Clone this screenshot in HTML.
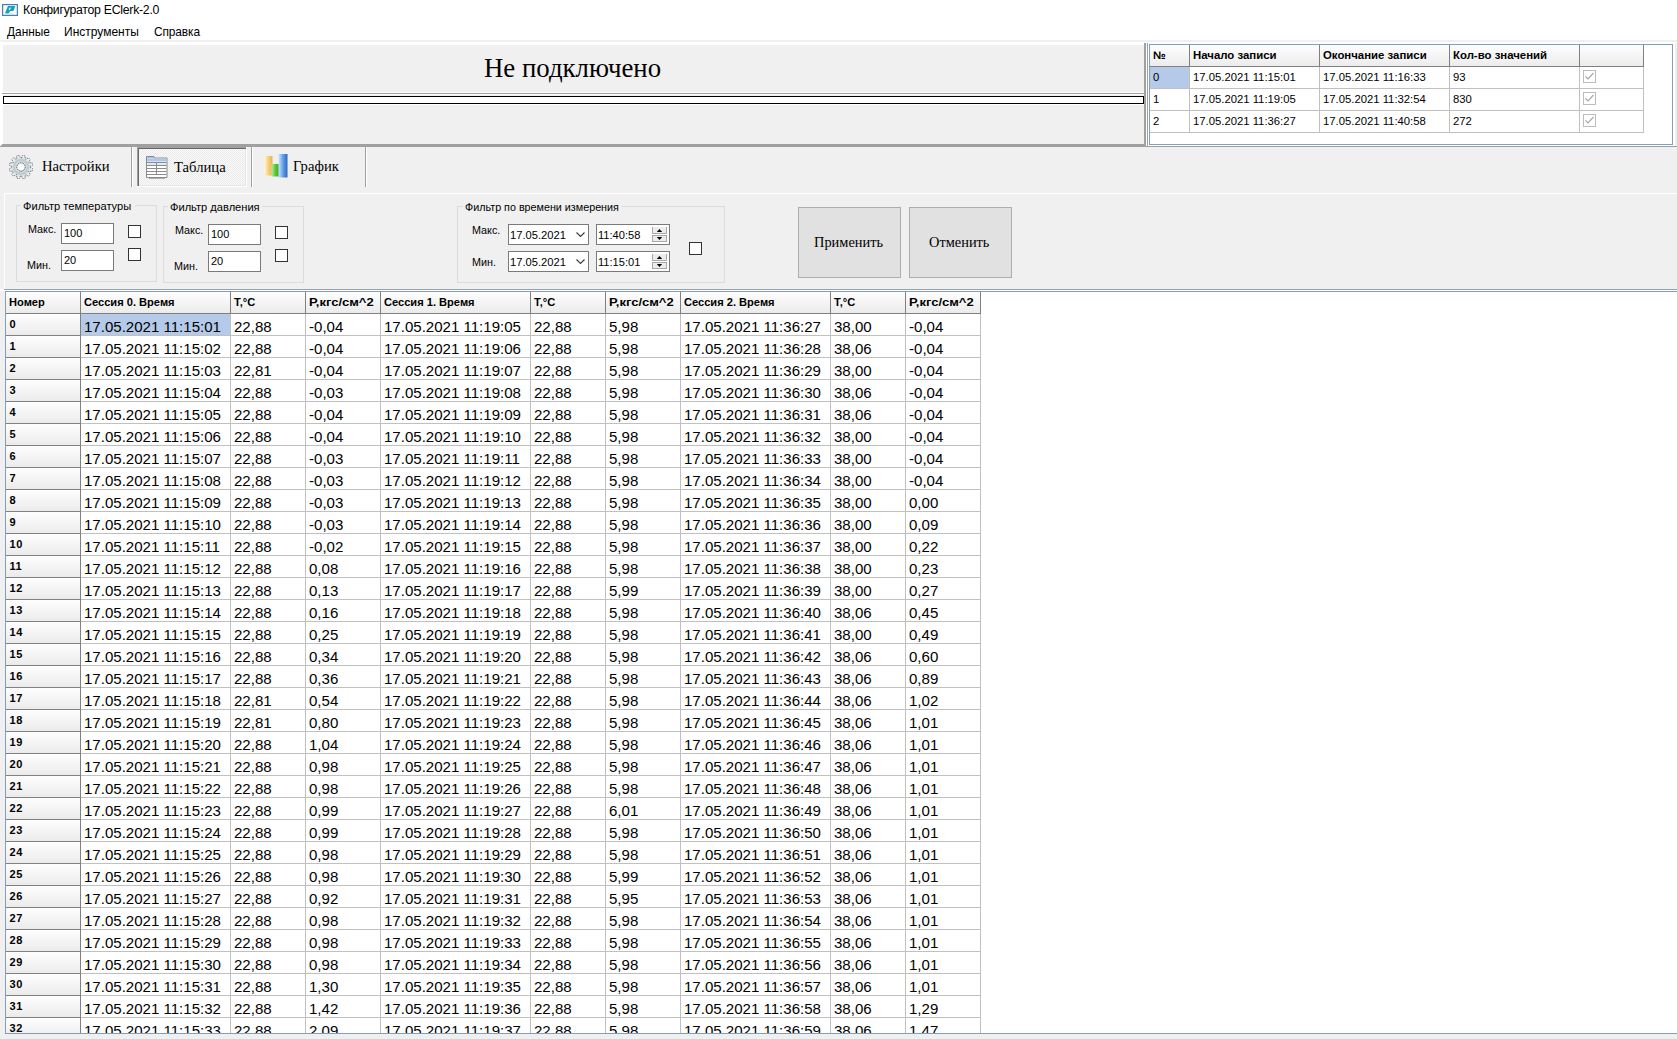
<!DOCTYPE html>
<html><head><meta charset="utf-8"><title>Конфигуратор EClerk-2.0</title>
<style>
html,body{margin:0;padding:0}
body{width:1677px;height:1039px;overflow:hidden;background:#fff;position:relative;font-family:"Liberation Sans", sans-serif;color:#000}
.a{position:absolute}
.t{position:absolute;white-space:pre;font-family:"Liberation Sans", sans-serif}
.sf{font-family:"Liberation Serif", serif}
</style></head><body>
<svg class="a" style="left:2px;top:4px" width="16" height="12" viewBox="0 0 16 12">
<rect x="0.6" y="0.6" width="14.8" height="10.8" fill="#fdfbf0" stroke="#3f83b8" stroke-width="1.2"/>
<path d="M6 2 H13.2 L12 6 Q11.6 6.9 10.5 6.9 H8.2 L6.9 8.9 Q6.5 9.4 5.5 9.4 H3.6 Q3 9.3 3.3 8.6 Z" fill="#14a0c2"/>
<path d="M7.6 3.4 H8.9 L7.9 6.1 H6.6 Z" fill="#fdfbf0"/>
<path d="M6.5 9.8 H11" stroke="#c4e0ea" stroke-width="0.9"/>
</svg>
<div class="t" style="left:23px;top:3.868px;font-size:12.3px;line-height:13.739px;letter-spacing:-0.27px;">Конфигуратор EClerk-2.0</div>
<div class="t" style="left:7px;top:26.23px;font-size:11.9px;line-height:13.292px;">Данные</div>
<div class="t" style="left:64px;top:26.14px;font-size:12px;line-height:13.404px;">Инструменты</div>
<div class="t" style="left:154px;top:26.23px;font-size:11.9px;line-height:13.292px;letter-spacing:-0.1px;">Справка</div>
<div class="a" style="left:0px;top:40px;width:1677px;height:2px;background:#f0f0f0"></div>
<div class="a" style="left:3px;top:45px;width:1141px;height:99px;background:#f0f0f0"></div>
<div class="a" style="left:2px;top:92px;width:1143px;height:1px;background:#fff"></div>
<div class="a" style="left:2px;top:93px;width:1143px;height:1px;background:#a0a0a0"></div>
<div class="a" style="left:2px;top:94px;width:1143px;height:1px;background:#fff"></div>
<div class="a" style="left:3px;top:96px;width:1141px;height:8px;background:#fff;border:1px solid #000;box-sizing:border-box"></div>
<div class="a" style="left:3px;top:104px;width:1141px;height:1px;background:#fff"></div>
<div class="t sf" style="left:484px;top:54.121px;font-size:26.8px;line-height:29.668px;">Не подключено</div>
<div class="a" style="left:1144px;top:43px;width:2px;height:104px;background:#a0a0a0"></div>
<div class="a" style="left:1146px;top:43px;width:1px;height:104px;background:#fff"></div>
<div class="a" style="left:1147px;top:43px;width:1px;height:104px;background:#a0a0a0"></div>
<div class="a" style="left:1148px;top:43px;width:1px;height:104px;background:#fff"></div>
<div class="a" style="left:1149px;top:44px;width:524px;height:101px;background:#fff;border:1px solid #7f9fbf;box-sizing:border-box"></div>
<div class="a" style="left:1673px;top:43px;width:2px;height:104px;background:#fff"></div>
<div class="a" style="left:1675px;top:43px;width:2px;height:104px;background:#f0f0f0"></div>
<div class="a" style="left:1150px;top:45px;width:493px;height:21px;background:linear-gradient(#fefefe,#ececec)"></div>
<div class="a" style="left:1150px;top:66px;width:494px;height:1px;background:#808080"></div>
<div class="a" style="left:1189px;top:45px;width:1px;height:21px;background:#808080"></div>
<div class="a" style="left:1319px;top:45px;width:1px;height:21px;background:#808080"></div>
<div class="a" style="left:1449px;top:45px;width:1px;height:21px;background:#808080"></div>
<div class="a" style="left:1579px;top:45px;width:1px;height:21px;background:#808080"></div>
<div class="a" style="left:1643px;top:45px;width:1px;height:21px;background:#808080"></div>
<div class="t" style="left:1153px;top:48.683px;font-size:11.4px;line-height:12.734px;font-weight:bold;">№</div>
<div class="t" style="left:1193px;top:48.683px;font-size:11.4px;line-height:12.734px;font-weight:bold;">Начало записи</div>
<div class="t" style="left:1323px;top:48.683px;font-size:11.4px;line-height:12.734px;font-weight:bold;">Окончание записи</div>
<div class="t" style="left:1453px;top:48.683px;font-size:11.4px;line-height:12.734px;font-weight:bold;">Кол-во значений</div>
<div class="a" style="left:1150px;top:67px;width:39px;height:21px;background:#b5cae8"></div>
<div class="a" style="left:1150px;top:88px;width:494px;height:1px;background:#c0c0c0"></div>
<div class="t" style="left:1153px;top:70.773px;font-size:11.3px;line-height:12.622px;">0</div>
<div class="t" style="left:1193px;top:70.773px;font-size:11.3px;line-height:12.622px;">17.05.2021 11:15:01</div>
<div class="t" style="left:1323px;top:70.773px;font-size:11.3px;line-height:12.622px;">17.05.2021 11:16:33</div>
<div class="t" style="left:1453px;top:70.773px;font-size:11.3px;line-height:12.622px;">93</div>
<svg class="a" style="left:1583px;top:70px" width="13" height="13" viewBox="0 0 13 13"><rect x="0.5" y="0.5" width="12" height="12" fill="#fff" stroke="#bcbcbc"/><path d="M2.5 6.5 L5 9 L10.5 3" fill="none" stroke="#a8a8a8" stroke-width="1.2"/></svg>
<div class="a" style="left:1150px;top:110px;width:494px;height:1px;background:#c0c0c0"></div>
<div class="t" style="left:1153px;top:92.773px;font-size:11.3px;line-height:12.622px;">1</div>
<div class="t" style="left:1193px;top:92.773px;font-size:11.3px;line-height:12.622px;">17.05.2021 11:19:05</div>
<div class="t" style="left:1323px;top:92.773px;font-size:11.3px;line-height:12.622px;">17.05.2021 11:32:54</div>
<div class="t" style="left:1453px;top:92.773px;font-size:11.3px;line-height:12.622px;">830</div>
<svg class="a" style="left:1583px;top:92px" width="13" height="13" viewBox="0 0 13 13"><rect x="0.5" y="0.5" width="12" height="12" fill="#fff" stroke="#bcbcbc"/><path d="M2.5 6.5 L5 9 L10.5 3" fill="none" stroke="#a8a8a8" stroke-width="1.2"/></svg>
<div class="a" style="left:1150px;top:132px;width:494px;height:1px;background:#c0c0c0"></div>
<div class="t" style="left:1153px;top:114.773px;font-size:11.3px;line-height:12.622px;">2</div>
<div class="t" style="left:1193px;top:114.773px;font-size:11.3px;line-height:12.622px;">17.05.2021 11:36:27</div>
<div class="t" style="left:1323px;top:114.773px;font-size:11.3px;line-height:12.622px;">17.05.2021 11:40:58</div>
<div class="t" style="left:1453px;top:114.773px;font-size:11.3px;line-height:12.622px;">272</div>
<svg class="a" style="left:1583px;top:114px" width="13" height="13" viewBox="0 0 13 13"><rect x="0.5" y="0.5" width="12" height="12" fill="#fff" stroke="#bcbcbc"/><path d="M2.5 6.5 L5 9 L10.5 3" fill="none" stroke="#a8a8a8" stroke-width="1.2"/></svg>
<div class="a" style="left:1189px;top:67px;width:1px;height:66px;background:#c0c0c0"></div>
<div class="a" style="left:1319px;top:67px;width:1px;height:66px;background:#c0c0c0"></div>
<div class="a" style="left:1449px;top:67px;width:1px;height:66px;background:#c0c0c0"></div>
<div class="a" style="left:1579px;top:67px;width:1px;height:66px;background:#c0c0c0"></div>
<div class="a" style="left:1643px;top:67px;width:1px;height:66px;background:#c0c0c0"></div>
<div class="a" style="left:0px;top:144px;width:1144px;height:3px;background:#a0a0a0"></div>
<div class="a" style="left:1149px;top:145px;width:526px;height:1px;background:#fff"></div>
<div class="a" style="left:1146px;top:146px;width:531px;height:1px;background:#a0a0a0"></div>
<div class="a" style="left:0px;top:144px;width:2px;height:1px;background:#fff"></div>
<div class="a" style="left:0px;top:145px;width:1px;height:1px;background:#fff"></div>
<div class="a" style="left:0px;top:147px;width:1677px;height:142px;background:#f0f0f0"></div>
<svg class="a" style="left:8.5px;top:154.5px" width="24" height="24" viewBox="0 0 24 24">
<defs><radialGradient id="gr"><stop offset="0.3" stop-color="#ffffff"/><stop offset="0.6" stop-color="#b9c4ca"/><stop offset="0.8" stop-color="#e8ecee"/><stop offset="1" stop-color="#f4f6f7"/></radialGradient></defs>
<path d="M12.47 3.01 L13.72 0.33 L16.34 1.03 L16.09 3.98 L16.90 4.45 L19.33 2.75 L21.25 4.67 L19.55 7.10 L20.02 7.91 L22.97 7.66 L23.67 10.28 L20.99 11.53 L20.99 12.47 L23.67 13.72 L22.97 16.34 L20.02 16.09 L19.55 16.90 L21.25 19.33 L19.33 21.25 L16.90 19.55 L16.09 20.02 L16.34 22.97 L13.72 23.67 L12.47 20.99 L11.53 20.99 L10.28 23.67 L7.66 22.97 L7.91 20.02 L7.10 19.55 L4.67 21.25 L2.75 19.33 L4.45 16.90 L3.98 16.09 L1.03 16.34 L0.33 13.72 L3.01 12.47 L3.01 11.53 L0.33 10.28 L1.03 7.66 L3.98 7.91 L4.45 7.10 L2.75 4.67 L4.67 2.75 L7.10 4.45 L7.91 3.98 L7.66 1.03 L10.28 0.33 L11.53 3.01 Z" fill="url(#gr)" stroke="#4d5c64" stroke-width="0.9" stroke-dasharray="1.2 1.0"/>
<circle cx="12" cy="12" r="6.4" fill="none" stroke="#c3ccd1" stroke-width="1.2"/>
<circle cx="12" cy="12" r="4.2" fill="#fafbfb" stroke="#4a5860" stroke-width="1.0" stroke-dasharray="1.6 0.7"/>
</svg>
<div class="t sf" style="left:42px;top:157.929px;font-size:14.67px;line-height:16.24px;">Настройки</div>
<div class="a" style="left:131px;top:147px;width:1px;height:40px;background:#a0a0a0"></div>
<div class="a" style="left:132px;top:147px;width:1px;height:40px;background:#fff"></div>
<div class="a" style="left:137px;top:147px;width:110px;height:40px;background:#fff"></div>
<div class="a" style="left:137px;top:147px;width:109px;height:39px;background:#a0a0a0"></div>
<div class="a" style="left:138px;top:148px;width:108px;height:38px;background:#696969"></div>
<div class="a" style="left:139px;top:149px;width:107px;height:37px;background:repeating-conic-gradient(#fbfbfb 0% 25%, #e9e9e9 0% 50%) 0 0/2px 2px"></div>
<div class="a" style="left:139px;top:185px;width:107px;height:1px;background:#e6e6e6"></div>
<div class="a" style="left:245px;top:149px;width:1px;height:37px;background:#e6e6e6"></div>
<svg class="a" style="left:146px;top:156px" width="22" height="23" viewBox="0 0 22 23">
<path d="M0.5 21.5 L0.5 0.5 L8 0.5 L8 2 L21 2 L21 21.5 Z" fill="#fff" stroke="#8a8a8a"/>
<rect x="1" y="1" width="7" height="1.5" fill="#a9c4e6"/>
<rect x="1" y="2.5" width="19.5" height="3" fill="#adc8ea"/>
<rect x="1.5" y="7" width="18.5" height="2.5" fill="#dfe9f7"/>
<g stroke="#8c8c8c" stroke-width="1" fill="none">
<path d="M1 6.5 H20.5 M1 9.5 H20.5 M1 12.5 H20.5 M1 15.5 H20.5 M1 18.5 H20.5 M10.5 6.5 V18.5"/>
</g>
<path d="M3 22.5 H19" stroke="#b0b0b0"/>
</svg>
<div class="t sf" style="left:174px;top:158.929px;font-size:14.67px;line-height:16.24px;">Таблица</div>
<div class="a" style="left:251px;top:147px;width:1px;height:40px;background:#a0a0a0"></div>
<div class="a" style="left:252px;top:147px;width:1px;height:40px;background:#fff"></div>
<svg class="a" style="left:263px;top:153px" width="25" height="26" viewBox="0 0 25 26">
<defs>
<linearGradient id="gy" x1="0" x2="1"><stop offset="0" stop-color="#fff6cf"/><stop offset="0.5" stop-color="#f7cf78"/><stop offset="1" stop-color="#e9b24c"/></linearGradient>
<linearGradient id="gg" x1="0" x2="1"><stop offset="0" stop-color="#b7f0a0"/><stop offset="0.5" stop-color="#5cc83a"/><stop offset="1" stop-color="#3ea82a"/></linearGradient>
<linearGradient id="gb" x1="0" x2="1"><stop offset="0" stop-color="#cfe4ff"/><stop offset="0.5" stop-color="#5f9fe8"/><stop offset="1" stop-color="#2f67c0"/></linearGradient>
</defs>
<rect x="1.5" y="3" width="8" height="19.5" fill="url(#gy)"/>
<rect x="8.5" y="11" width="7.5" height="12.5" fill="url(#gg)"/>
<rect x="15.5" y="1" width="9" height="23.5" fill="url(#gb)"/>
</svg>
<div class="t sf" style="left:293px;top:157.929px;font-size:14.67px;line-height:16.24px;">График</div>
<div class="a" style="left:365px;top:147px;width:1px;height:40px;background:#a0a0a0"></div>
<div class="a" style="left:366px;top:147px;width:1px;height:40px;background:#fff"></div>
<div class="a" style="left:4px;top:193px;width:1673px;height:1px;background:#fff"></div>
<div class="a" style="left:4px;top:193px;width:1px;height:96px;background:#fff"></div>
<div class="a" style="left:4px;top:289px;width:1673px;height:1px;background:#a0a0a0"></div>
<div class="a" style="left:5px;top:290px;width:1672px;height:1px;background:#fff"></div>
<div class="a" style="left:16px;top:205px;width:141px;height:77px;border:1px solid #dcdcdc;box-sizing:border-box"></div>
<div class="a" style="left:21px;top:204px;width:114px;height:3px;background:#f0f0f0"></div>
<div class="t" style="left:23px;top:199.954px;font-size:11.1px;line-height:12.399px;">Фильтр температуры</div>
<div class="t" style="left:28px;top:223.226px;font-size:10.8px;line-height:12.064px;">Макс.</div>
<div class="a" style="left:61px;top:223px;width:53px;height:21px;background:#fff;border:1px solid #7a7a7a;box-sizing:border-box"></div>
<div class="t" style="left:64px;top:227.045px;font-size:11px;line-height:12.287px;">100</div>
<div class="t" style="left:27px;top:259.226px;font-size:10.8px;line-height:12.064px;">Мин.</div>
<div class="a" style="left:61px;top:250px;width:53px;height:21px;background:#fff;border:1px solid #7a7a7a;box-sizing:border-box"></div>
<div class="t" style="left:64px;top:254.045px;font-size:11px;line-height:12.287px;">20</div>
<div class="a" style="left:128px;top:225px;width:13px;height:13px;background:#fff;border:1px solid #333;box-sizing:border-box"></div>
<div class="a" style="left:128px;top:248px;width:13px;height:13px;background:#fff;border:1px solid #333;box-sizing:border-box"></div>
<div class="a" style="left:163px;top:206px;width:141px;height:77px;border:1px solid #dcdcdc;box-sizing:border-box"></div>
<div class="a" style="left:168px;top:205px;width:94px;height:3px;background:#f0f0f0"></div>
<div class="t" style="left:170px;top:200.954px;font-size:11.1px;line-height:12.399px;">Фильтр давления</div>
<div class="t" style="left:175px;top:224.226px;font-size:10.8px;line-height:12.064px;">Макс.</div>
<div class="a" style="left:208px;top:224px;width:53px;height:21px;background:#fff;border:1px solid #7a7a7a;box-sizing:border-box"></div>
<div class="t" style="left:211px;top:228.045px;font-size:11px;line-height:12.287px;">100</div>
<div class="t" style="left:174px;top:260.226px;font-size:10.8px;line-height:12.064px;">Мин.</div>
<div class="a" style="left:208px;top:251px;width:53px;height:21px;background:#fff;border:1px solid #7a7a7a;box-sizing:border-box"></div>
<div class="t" style="left:211px;top:255.045px;font-size:11px;line-height:12.287px;">20</div>
<div class="a" style="left:275px;top:226px;width:13px;height:13px;background:#fff;border:1px solid #333;box-sizing:border-box"></div>
<div class="a" style="left:275px;top:249px;width:13px;height:13px;background:#fff;border:1px solid #333;box-sizing:border-box"></div>
<div class="a" style="left:457px;top:206px;width:268px;height:77px;border:1px solid #dcdcdc;box-sizing:border-box"></div>
<div class="a" style="left:463px;top:205px;width:158px;height:3px;background:#f0f0f0"></div>
<div class="t" style="left:465px;top:201.271px;font-size:10.75px;line-height:12.008px;">Фильтр по времени измерения</div>
<div class="t" style="left:472px;top:224.226px;font-size:10.8px;line-height:12.064px;">Макс.</div>
<div class="t" style="left:472px;top:256.226px;font-size:10.8px;line-height:12.064px;">Мин.</div>
<div class="a" style="left:508px;top:224px;width:81px;height:21px;background:#fff;border:1px solid #7a7a7a;box-sizing:border-box"></div>
<div class="t" style="left:510px;top:228.864px;font-size:11.2px;line-height:12.51px;">17.05.2021</div>
<svg class="a" style="left:576px;top:232px" width="9" height="6" viewBox="0 0 9 6"><path d="M0.5 0.5 L4.5 4.5 L8.5 0.5" fill="none" stroke="#3a3a3a" stroke-width="1.1"/></svg>
<div class="a" style="left:596px;top:224px;width:74px;height:21px;background:#fff;border:1px solid #7a7a7a;box-sizing:border-box"></div>
<div class="t" style="left:598px;top:228.954px;font-size:11.1px;line-height:12.399px;">11:40:58</div>
<svg class="a" style="left:652px;top:227px" width="15" height="15" viewBox="0 0 15 15"><rect x="1" y="0" width="13" height="6" fill="#ececec"/><path d="M0.5 0 V6.5 H14.5 V0" fill="none" stroke="#a8a8a8"/><rect x="0.5" y="8.5" width="14" height="6" fill="#ececec" stroke="#a8a8a8"/><path d="M4.8 4.9 L7.5 1.9 L10.2 4.9 Z" fill="#000"/><path d="M4.8 10 L10.2 10 L7.5 13 Z" fill="#000"/></svg>
<div class="a" style="left:508px;top:251px;width:81px;height:21px;background:#fff;border:1px solid #7a7a7a;box-sizing:border-box"></div>
<div class="t" style="left:510px;top:255.864px;font-size:11.2px;line-height:12.51px;">17.05.2021</div>
<svg class="a" style="left:576px;top:259px" width="9" height="6" viewBox="0 0 9 6"><path d="M0.5 0.5 L4.5 4.5 L8.5 0.5" fill="none" stroke="#3a3a3a" stroke-width="1.1"/></svg>
<div class="a" style="left:596px;top:251px;width:74px;height:21px;background:#fff;border:1px solid #7a7a7a;box-sizing:border-box"></div>
<div class="t" style="left:598px;top:255.954px;font-size:11.1px;line-height:12.399px;">11:15:01</div>
<svg class="a" style="left:652px;top:254px" width="15" height="15" viewBox="0 0 15 15"><rect x="1" y="0" width="13" height="6" fill="#ececec"/><path d="M0.5 0 V6.5 H14.5 V0" fill="none" stroke="#a8a8a8"/><rect x="0.5" y="8.5" width="14" height="6" fill="#ececec" stroke="#a8a8a8"/><path d="M4.8 4.9 L7.5 1.9 L10.2 4.9 Z" fill="#000"/><path d="M4.8 10 L10.2 10 L7.5 13 Z" fill="#000"/></svg>
<div class="a" style="left:689px;top:242px;width:13px;height:13px;background:#fff;border:1px solid #333;box-sizing:border-box"></div>
<div class="a" style="left:798px;top:207px;width:103px;height:71px;background:#e1e1e1;border:1px solid #adadad;box-sizing:border-box"></div>
<div class="t sf" style="left:814px;top:235.17px;font-size:14.4px;line-height:15.941px;">Применить</div>
<div class="a" style="left:909px;top:207px;width:103px;height:71px;background:#e1e1e1;border:1px solid #adadad;box-sizing:border-box"></div>
<div class="t sf" style="left:929px;top:235.17px;font-size:14.4px;line-height:15.941px;">Отменить</div>
<div class="a" style="left:5px;top:291px;width:1672px;height:743px;background:#fff"></div>
<div class="a" style="left:0px;top:1034px;width:1677px;height:5px;background:#f0f0f0"></div>
<div class="a" style="left:0px;top:291px;width:5px;height:748px;background:#f0f0f0"></div>
<div class="a" style="left:6px;top:292px;width:1671px;height:741px;overflow:hidden">
<div class="a" style="left:0px;top:0px;width:974px;height:21px;background:linear-gradient(#fefefe,#ebebeb)"></div>
<div class="a" style="left:0px;top:21px;width:975px;height:1px;background:#808080"></div>
<div class="a" style="left:74px;top:0px;width:1px;height:21px;background:#808080"></div>
<div class="a" style="left:224px;top:0px;width:1px;height:21px;background:#808080"></div>
<div class="a" style="left:299px;top:0px;width:1px;height:21px;background:#808080"></div>
<div class="a" style="left:374px;top:0px;width:1px;height:21px;background:#808080"></div>
<div class="a" style="left:524px;top:0px;width:1px;height:21px;background:#808080"></div>
<div class="a" style="left:599px;top:0px;width:1px;height:21px;background:#808080"></div>
<div class="a" style="left:674px;top:0px;width:1px;height:21px;background:#808080"></div>
<div class="a" style="left:824px;top:0px;width:1px;height:21px;background:#808080"></div>
<div class="a" style="left:899px;top:0px;width:1px;height:21px;background:#808080"></div>
<div class="a" style="left:974px;top:0px;width:1px;height:21px;background:#808080"></div>
<div class="t" style="left:3px;top:3.954px;font-size:11.1px;line-height:12.399px;font-weight:bold;">Номер</div>
<div class="t" style="left:78px;top:3.954px;font-size:11.1px;line-height:12.399px;font-weight:bold;">Сессия 0. Время</div>
<div class="t" style="left:228px;top:3.954px;font-size:11.1px;line-height:12.399px;font-weight:bold;">Т,°С</div>
<div class="t" style="left:303px;top:3.954px;font-size:11.1px;line-height:12.399px;font-weight:bold;transform:scaleX(1.17);transform-origin:0 0;">Р,кгс/см^2</div>
<div class="t" style="left:378px;top:3.954px;font-size:11.1px;line-height:12.399px;font-weight:bold;">Сессия 1. Время</div>
<div class="t" style="left:528px;top:3.954px;font-size:11.1px;line-height:12.399px;font-weight:bold;">Т,°С</div>
<div class="t" style="left:603px;top:3.954px;font-size:11.1px;line-height:12.399px;font-weight:bold;transform:scaleX(1.17);transform-origin:0 0;">Р,кгс/см^2</div>
<div class="t" style="left:678px;top:3.954px;font-size:11.1px;line-height:12.399px;font-weight:bold;">Сессия 2. Время</div>
<div class="t" style="left:828px;top:3.954px;font-size:11.1px;line-height:12.399px;font-weight:bold;">Т,°С</div>
<div class="t" style="left:903px;top:3.954px;font-size:11.1px;line-height:12.399px;font-weight:bold;transform:scaleX(1.17);transform-origin:0 0;">Р,кгс/см^2</div>
<div class="a" style="left:75px;top:22px;width:149px;height:21px;background:#b5cae8"></div>
<div class="a" style="left:0px;top:22px;width:74px;height:21px;background:linear-gradient(#fefefe,#ebebeb)"></div>
<div class="a" style="left:0px;top:43px;width:75px;height:1px;background:#808080"></div>
<div class="t" style="left:3.5px;top:26.045px;font-size:11px;line-height:12.287px;font-weight:bold;letter-spacing:0.6px;">0</div>
<div class="a" style="left:75px;top:43px;width:900px;height:1px;background:#c0c0c0"></div>
<div class="t" style="left:78px;top:26.88px;font-size:15.05px;line-height:16.811px;">17.05.2021 11:15:01</div>
<div class="t" style="left:228px;top:26.88px;font-size:15.05px;line-height:16.811px;">22,88</div>
<div class="t" style="left:303px;top:26.88px;font-size:15.05px;line-height:16.811px;">-0,04</div>
<div class="t" style="left:378px;top:26.88px;font-size:15.05px;line-height:16.811px;">17.05.2021 11:19:05</div>
<div class="t" style="left:528px;top:26.88px;font-size:15.05px;line-height:16.811px;">22,88</div>
<div class="t" style="left:603px;top:26.88px;font-size:15.05px;line-height:16.811px;">5,98</div>
<div class="t" style="left:678px;top:26.88px;font-size:15.05px;line-height:16.811px;">17.05.2021 11:36:27</div>
<div class="t" style="left:828px;top:26.88px;font-size:15.05px;line-height:16.811px;">38,00</div>
<div class="t" style="left:903px;top:26.88px;font-size:15.05px;line-height:16.811px;">-0,04</div>
<div class="a" style="left:0px;top:44px;width:74px;height:21px;background:linear-gradient(#fefefe,#ebebeb)"></div>
<div class="a" style="left:0px;top:65px;width:75px;height:1px;background:#808080"></div>
<div class="t" style="left:3.5px;top:48.045px;font-size:11px;line-height:12.287px;font-weight:bold;letter-spacing:0.6px;">1</div>
<div class="a" style="left:75px;top:65px;width:900px;height:1px;background:#c0c0c0"></div>
<div class="t" style="left:78px;top:48.88px;font-size:15.05px;line-height:16.811px;">17.05.2021 11:15:02</div>
<div class="t" style="left:228px;top:48.88px;font-size:15.05px;line-height:16.811px;">22,88</div>
<div class="t" style="left:303px;top:48.88px;font-size:15.05px;line-height:16.811px;">-0,04</div>
<div class="t" style="left:378px;top:48.88px;font-size:15.05px;line-height:16.811px;">17.05.2021 11:19:06</div>
<div class="t" style="left:528px;top:48.88px;font-size:15.05px;line-height:16.811px;">22,88</div>
<div class="t" style="left:603px;top:48.88px;font-size:15.05px;line-height:16.811px;">5,98</div>
<div class="t" style="left:678px;top:48.88px;font-size:15.05px;line-height:16.811px;">17.05.2021 11:36:28</div>
<div class="t" style="left:828px;top:48.88px;font-size:15.05px;line-height:16.811px;">38,06</div>
<div class="t" style="left:903px;top:48.88px;font-size:15.05px;line-height:16.811px;">-0,04</div>
<div class="a" style="left:0px;top:66px;width:74px;height:21px;background:linear-gradient(#fefefe,#ebebeb)"></div>
<div class="a" style="left:0px;top:87px;width:75px;height:1px;background:#808080"></div>
<div class="t" style="left:3.5px;top:70.045px;font-size:11px;line-height:12.287px;font-weight:bold;letter-spacing:0.6px;">2</div>
<div class="a" style="left:75px;top:87px;width:900px;height:1px;background:#c0c0c0"></div>
<div class="t" style="left:78px;top:70.88px;font-size:15.05px;line-height:16.811px;">17.05.2021 11:15:03</div>
<div class="t" style="left:228px;top:70.88px;font-size:15.05px;line-height:16.811px;">22,81</div>
<div class="t" style="left:303px;top:70.88px;font-size:15.05px;line-height:16.811px;">-0,04</div>
<div class="t" style="left:378px;top:70.88px;font-size:15.05px;line-height:16.811px;">17.05.2021 11:19:07</div>
<div class="t" style="left:528px;top:70.88px;font-size:15.05px;line-height:16.811px;">22,88</div>
<div class="t" style="left:603px;top:70.88px;font-size:15.05px;line-height:16.811px;">5,98</div>
<div class="t" style="left:678px;top:70.88px;font-size:15.05px;line-height:16.811px;">17.05.2021 11:36:29</div>
<div class="t" style="left:828px;top:70.88px;font-size:15.05px;line-height:16.811px;">38,00</div>
<div class="t" style="left:903px;top:70.88px;font-size:15.05px;line-height:16.811px;">-0,04</div>
<div class="a" style="left:0px;top:88px;width:74px;height:21px;background:linear-gradient(#fefefe,#ebebeb)"></div>
<div class="a" style="left:0px;top:109px;width:75px;height:1px;background:#808080"></div>
<div class="t" style="left:3.5px;top:92.045px;font-size:11px;line-height:12.287px;font-weight:bold;letter-spacing:0.6px;">3</div>
<div class="a" style="left:75px;top:109px;width:900px;height:1px;background:#c0c0c0"></div>
<div class="t" style="left:78px;top:92.88px;font-size:15.05px;line-height:16.811px;">17.05.2021 11:15:04</div>
<div class="t" style="left:228px;top:92.88px;font-size:15.05px;line-height:16.811px;">22,88</div>
<div class="t" style="left:303px;top:92.88px;font-size:15.05px;line-height:16.811px;">-0,03</div>
<div class="t" style="left:378px;top:92.88px;font-size:15.05px;line-height:16.811px;">17.05.2021 11:19:08</div>
<div class="t" style="left:528px;top:92.88px;font-size:15.05px;line-height:16.811px;">22,88</div>
<div class="t" style="left:603px;top:92.88px;font-size:15.05px;line-height:16.811px;">5,98</div>
<div class="t" style="left:678px;top:92.88px;font-size:15.05px;line-height:16.811px;">17.05.2021 11:36:30</div>
<div class="t" style="left:828px;top:92.88px;font-size:15.05px;line-height:16.811px;">38,06</div>
<div class="t" style="left:903px;top:92.88px;font-size:15.05px;line-height:16.811px;">-0,04</div>
<div class="a" style="left:0px;top:110px;width:74px;height:21px;background:linear-gradient(#fefefe,#ebebeb)"></div>
<div class="a" style="left:0px;top:131px;width:75px;height:1px;background:#808080"></div>
<div class="t" style="left:3.5px;top:114.045px;font-size:11px;line-height:12.287px;font-weight:bold;letter-spacing:0.6px;">4</div>
<div class="a" style="left:75px;top:131px;width:900px;height:1px;background:#c0c0c0"></div>
<div class="t" style="left:78px;top:114.88px;font-size:15.05px;line-height:16.811px;">17.05.2021 11:15:05</div>
<div class="t" style="left:228px;top:114.88px;font-size:15.05px;line-height:16.811px;">22,88</div>
<div class="t" style="left:303px;top:114.88px;font-size:15.05px;line-height:16.811px;">-0,04</div>
<div class="t" style="left:378px;top:114.88px;font-size:15.05px;line-height:16.811px;">17.05.2021 11:19:09</div>
<div class="t" style="left:528px;top:114.88px;font-size:15.05px;line-height:16.811px;">22,88</div>
<div class="t" style="left:603px;top:114.88px;font-size:15.05px;line-height:16.811px;">5,98</div>
<div class="t" style="left:678px;top:114.88px;font-size:15.05px;line-height:16.811px;">17.05.2021 11:36:31</div>
<div class="t" style="left:828px;top:114.88px;font-size:15.05px;line-height:16.811px;">38,06</div>
<div class="t" style="left:903px;top:114.88px;font-size:15.05px;line-height:16.811px;">-0,04</div>
<div class="a" style="left:0px;top:132px;width:74px;height:21px;background:linear-gradient(#fefefe,#ebebeb)"></div>
<div class="a" style="left:0px;top:153px;width:75px;height:1px;background:#808080"></div>
<div class="t" style="left:3.5px;top:136.045px;font-size:11px;line-height:12.287px;font-weight:bold;letter-spacing:0.6px;">5</div>
<div class="a" style="left:75px;top:153px;width:900px;height:1px;background:#c0c0c0"></div>
<div class="t" style="left:78px;top:136.88px;font-size:15.05px;line-height:16.811px;">17.05.2021 11:15:06</div>
<div class="t" style="left:228px;top:136.88px;font-size:15.05px;line-height:16.811px;">22,88</div>
<div class="t" style="left:303px;top:136.88px;font-size:15.05px;line-height:16.811px;">-0,04</div>
<div class="t" style="left:378px;top:136.88px;font-size:15.05px;line-height:16.811px;">17.05.2021 11:19:10</div>
<div class="t" style="left:528px;top:136.88px;font-size:15.05px;line-height:16.811px;">22,88</div>
<div class="t" style="left:603px;top:136.88px;font-size:15.05px;line-height:16.811px;">5,98</div>
<div class="t" style="left:678px;top:136.88px;font-size:15.05px;line-height:16.811px;">17.05.2021 11:36:32</div>
<div class="t" style="left:828px;top:136.88px;font-size:15.05px;line-height:16.811px;">38,00</div>
<div class="t" style="left:903px;top:136.88px;font-size:15.05px;line-height:16.811px;">-0,04</div>
<div class="a" style="left:0px;top:154px;width:74px;height:21px;background:linear-gradient(#fefefe,#ebebeb)"></div>
<div class="a" style="left:0px;top:175px;width:75px;height:1px;background:#808080"></div>
<div class="t" style="left:3.5px;top:158.045px;font-size:11px;line-height:12.287px;font-weight:bold;letter-spacing:0.6px;">6</div>
<div class="a" style="left:75px;top:175px;width:900px;height:1px;background:#c0c0c0"></div>
<div class="t" style="left:78px;top:158.88px;font-size:15.05px;line-height:16.811px;">17.05.2021 11:15:07</div>
<div class="t" style="left:228px;top:158.88px;font-size:15.05px;line-height:16.811px;">22,88</div>
<div class="t" style="left:303px;top:158.88px;font-size:15.05px;line-height:16.811px;">-0,03</div>
<div class="t" style="left:378px;top:158.88px;font-size:15.05px;line-height:16.811px;">17.05.2021 11:19:11</div>
<div class="t" style="left:528px;top:158.88px;font-size:15.05px;line-height:16.811px;">22,88</div>
<div class="t" style="left:603px;top:158.88px;font-size:15.05px;line-height:16.811px;">5,98</div>
<div class="t" style="left:678px;top:158.88px;font-size:15.05px;line-height:16.811px;">17.05.2021 11:36:33</div>
<div class="t" style="left:828px;top:158.88px;font-size:15.05px;line-height:16.811px;">38,00</div>
<div class="t" style="left:903px;top:158.88px;font-size:15.05px;line-height:16.811px;">-0,04</div>
<div class="a" style="left:0px;top:176px;width:74px;height:21px;background:linear-gradient(#fefefe,#ebebeb)"></div>
<div class="a" style="left:0px;top:197px;width:75px;height:1px;background:#808080"></div>
<div class="t" style="left:3.5px;top:180.045px;font-size:11px;line-height:12.287px;font-weight:bold;letter-spacing:0.6px;">7</div>
<div class="a" style="left:75px;top:197px;width:900px;height:1px;background:#c0c0c0"></div>
<div class="t" style="left:78px;top:180.88px;font-size:15.05px;line-height:16.811px;">17.05.2021 11:15:08</div>
<div class="t" style="left:228px;top:180.88px;font-size:15.05px;line-height:16.811px;">22,88</div>
<div class="t" style="left:303px;top:180.88px;font-size:15.05px;line-height:16.811px;">-0,03</div>
<div class="t" style="left:378px;top:180.88px;font-size:15.05px;line-height:16.811px;">17.05.2021 11:19:12</div>
<div class="t" style="left:528px;top:180.88px;font-size:15.05px;line-height:16.811px;">22,88</div>
<div class="t" style="left:603px;top:180.88px;font-size:15.05px;line-height:16.811px;">5,98</div>
<div class="t" style="left:678px;top:180.88px;font-size:15.05px;line-height:16.811px;">17.05.2021 11:36:34</div>
<div class="t" style="left:828px;top:180.88px;font-size:15.05px;line-height:16.811px;">38,00</div>
<div class="t" style="left:903px;top:180.88px;font-size:15.05px;line-height:16.811px;">-0,04</div>
<div class="a" style="left:0px;top:198px;width:74px;height:21px;background:linear-gradient(#fefefe,#ebebeb)"></div>
<div class="a" style="left:0px;top:219px;width:75px;height:1px;background:#808080"></div>
<div class="t" style="left:3.5px;top:202.045px;font-size:11px;line-height:12.287px;font-weight:bold;letter-spacing:0.6px;">8</div>
<div class="a" style="left:75px;top:219px;width:900px;height:1px;background:#c0c0c0"></div>
<div class="t" style="left:78px;top:202.88px;font-size:15.05px;line-height:16.811px;">17.05.2021 11:15:09</div>
<div class="t" style="left:228px;top:202.88px;font-size:15.05px;line-height:16.811px;">22,88</div>
<div class="t" style="left:303px;top:202.88px;font-size:15.05px;line-height:16.811px;">-0,03</div>
<div class="t" style="left:378px;top:202.88px;font-size:15.05px;line-height:16.811px;">17.05.2021 11:19:13</div>
<div class="t" style="left:528px;top:202.88px;font-size:15.05px;line-height:16.811px;">22,88</div>
<div class="t" style="left:603px;top:202.88px;font-size:15.05px;line-height:16.811px;">5,98</div>
<div class="t" style="left:678px;top:202.88px;font-size:15.05px;line-height:16.811px;">17.05.2021 11:36:35</div>
<div class="t" style="left:828px;top:202.88px;font-size:15.05px;line-height:16.811px;">38,00</div>
<div class="t" style="left:903px;top:202.88px;font-size:15.05px;line-height:16.811px;">0,00</div>
<div class="a" style="left:0px;top:220px;width:74px;height:21px;background:linear-gradient(#fefefe,#ebebeb)"></div>
<div class="a" style="left:0px;top:241px;width:75px;height:1px;background:#808080"></div>
<div class="t" style="left:3.5px;top:224.045px;font-size:11px;line-height:12.287px;font-weight:bold;letter-spacing:0.6px;">9</div>
<div class="a" style="left:75px;top:241px;width:900px;height:1px;background:#c0c0c0"></div>
<div class="t" style="left:78px;top:224.88px;font-size:15.05px;line-height:16.811px;">17.05.2021 11:15:10</div>
<div class="t" style="left:228px;top:224.88px;font-size:15.05px;line-height:16.811px;">22,88</div>
<div class="t" style="left:303px;top:224.88px;font-size:15.05px;line-height:16.811px;">-0,03</div>
<div class="t" style="left:378px;top:224.88px;font-size:15.05px;line-height:16.811px;">17.05.2021 11:19:14</div>
<div class="t" style="left:528px;top:224.88px;font-size:15.05px;line-height:16.811px;">22,88</div>
<div class="t" style="left:603px;top:224.88px;font-size:15.05px;line-height:16.811px;">5,98</div>
<div class="t" style="left:678px;top:224.88px;font-size:15.05px;line-height:16.811px;">17.05.2021 11:36:36</div>
<div class="t" style="left:828px;top:224.88px;font-size:15.05px;line-height:16.811px;">38,00</div>
<div class="t" style="left:903px;top:224.88px;font-size:15.05px;line-height:16.811px;">0,09</div>
<div class="a" style="left:0px;top:242px;width:74px;height:21px;background:linear-gradient(#fefefe,#ebebeb)"></div>
<div class="a" style="left:0px;top:263px;width:75px;height:1px;background:#808080"></div>
<div class="t" style="left:3.5px;top:246.045px;font-size:11px;line-height:12.287px;font-weight:bold;letter-spacing:0.6px;">10</div>
<div class="a" style="left:75px;top:263px;width:900px;height:1px;background:#c0c0c0"></div>
<div class="t" style="left:78px;top:246.88px;font-size:15.05px;line-height:16.811px;">17.05.2021 11:15:11</div>
<div class="t" style="left:228px;top:246.88px;font-size:15.05px;line-height:16.811px;">22,88</div>
<div class="t" style="left:303px;top:246.88px;font-size:15.05px;line-height:16.811px;">-0,02</div>
<div class="t" style="left:378px;top:246.88px;font-size:15.05px;line-height:16.811px;">17.05.2021 11:19:15</div>
<div class="t" style="left:528px;top:246.88px;font-size:15.05px;line-height:16.811px;">22,88</div>
<div class="t" style="left:603px;top:246.88px;font-size:15.05px;line-height:16.811px;">5,98</div>
<div class="t" style="left:678px;top:246.88px;font-size:15.05px;line-height:16.811px;">17.05.2021 11:36:37</div>
<div class="t" style="left:828px;top:246.88px;font-size:15.05px;line-height:16.811px;">38,00</div>
<div class="t" style="left:903px;top:246.88px;font-size:15.05px;line-height:16.811px;">0,22</div>
<div class="a" style="left:0px;top:264px;width:74px;height:21px;background:linear-gradient(#fefefe,#ebebeb)"></div>
<div class="a" style="left:0px;top:285px;width:75px;height:1px;background:#808080"></div>
<div class="t" style="left:3.5px;top:268.045px;font-size:11px;line-height:12.287px;font-weight:bold;letter-spacing:0.6px;">11</div>
<div class="a" style="left:75px;top:285px;width:900px;height:1px;background:#c0c0c0"></div>
<div class="t" style="left:78px;top:268.88px;font-size:15.05px;line-height:16.811px;">17.05.2021 11:15:12</div>
<div class="t" style="left:228px;top:268.88px;font-size:15.05px;line-height:16.811px;">22,88</div>
<div class="t" style="left:303px;top:268.88px;font-size:15.05px;line-height:16.811px;">0,08</div>
<div class="t" style="left:378px;top:268.88px;font-size:15.05px;line-height:16.811px;">17.05.2021 11:19:16</div>
<div class="t" style="left:528px;top:268.88px;font-size:15.05px;line-height:16.811px;">22,88</div>
<div class="t" style="left:603px;top:268.88px;font-size:15.05px;line-height:16.811px;">5,98</div>
<div class="t" style="left:678px;top:268.88px;font-size:15.05px;line-height:16.811px;">17.05.2021 11:36:38</div>
<div class="t" style="left:828px;top:268.88px;font-size:15.05px;line-height:16.811px;">38,00</div>
<div class="t" style="left:903px;top:268.88px;font-size:15.05px;line-height:16.811px;">0,23</div>
<div class="a" style="left:0px;top:286px;width:74px;height:21px;background:linear-gradient(#fefefe,#ebebeb)"></div>
<div class="a" style="left:0px;top:307px;width:75px;height:1px;background:#808080"></div>
<div class="t" style="left:3.5px;top:290.045px;font-size:11px;line-height:12.287px;font-weight:bold;letter-spacing:0.6px;">12</div>
<div class="a" style="left:75px;top:307px;width:900px;height:1px;background:#c0c0c0"></div>
<div class="t" style="left:78px;top:290.88px;font-size:15.05px;line-height:16.811px;">17.05.2021 11:15:13</div>
<div class="t" style="left:228px;top:290.88px;font-size:15.05px;line-height:16.811px;">22,88</div>
<div class="t" style="left:303px;top:290.88px;font-size:15.05px;line-height:16.811px;">0,13</div>
<div class="t" style="left:378px;top:290.88px;font-size:15.05px;line-height:16.811px;">17.05.2021 11:19:17</div>
<div class="t" style="left:528px;top:290.88px;font-size:15.05px;line-height:16.811px;">22,88</div>
<div class="t" style="left:603px;top:290.88px;font-size:15.05px;line-height:16.811px;">5,99</div>
<div class="t" style="left:678px;top:290.88px;font-size:15.05px;line-height:16.811px;">17.05.2021 11:36:39</div>
<div class="t" style="left:828px;top:290.88px;font-size:15.05px;line-height:16.811px;">38,00</div>
<div class="t" style="left:903px;top:290.88px;font-size:15.05px;line-height:16.811px;">0,27</div>
<div class="a" style="left:0px;top:308px;width:74px;height:21px;background:linear-gradient(#fefefe,#ebebeb)"></div>
<div class="a" style="left:0px;top:329px;width:75px;height:1px;background:#808080"></div>
<div class="t" style="left:3.5px;top:312.045px;font-size:11px;line-height:12.287px;font-weight:bold;letter-spacing:0.6px;">13</div>
<div class="a" style="left:75px;top:329px;width:900px;height:1px;background:#c0c0c0"></div>
<div class="t" style="left:78px;top:312.88px;font-size:15.05px;line-height:16.811px;">17.05.2021 11:15:14</div>
<div class="t" style="left:228px;top:312.88px;font-size:15.05px;line-height:16.811px;">22,88</div>
<div class="t" style="left:303px;top:312.88px;font-size:15.05px;line-height:16.811px;">0,16</div>
<div class="t" style="left:378px;top:312.88px;font-size:15.05px;line-height:16.811px;">17.05.2021 11:19:18</div>
<div class="t" style="left:528px;top:312.88px;font-size:15.05px;line-height:16.811px;">22,88</div>
<div class="t" style="left:603px;top:312.88px;font-size:15.05px;line-height:16.811px;">5,98</div>
<div class="t" style="left:678px;top:312.88px;font-size:15.05px;line-height:16.811px;">17.05.2021 11:36:40</div>
<div class="t" style="left:828px;top:312.88px;font-size:15.05px;line-height:16.811px;">38,06</div>
<div class="t" style="left:903px;top:312.88px;font-size:15.05px;line-height:16.811px;">0,45</div>
<div class="a" style="left:0px;top:330px;width:74px;height:21px;background:linear-gradient(#fefefe,#ebebeb)"></div>
<div class="a" style="left:0px;top:351px;width:75px;height:1px;background:#808080"></div>
<div class="t" style="left:3.5px;top:334.045px;font-size:11px;line-height:12.287px;font-weight:bold;letter-spacing:0.6px;">14</div>
<div class="a" style="left:75px;top:351px;width:900px;height:1px;background:#c0c0c0"></div>
<div class="t" style="left:78px;top:334.88px;font-size:15.05px;line-height:16.811px;">17.05.2021 11:15:15</div>
<div class="t" style="left:228px;top:334.88px;font-size:15.05px;line-height:16.811px;">22,88</div>
<div class="t" style="left:303px;top:334.88px;font-size:15.05px;line-height:16.811px;">0,25</div>
<div class="t" style="left:378px;top:334.88px;font-size:15.05px;line-height:16.811px;">17.05.2021 11:19:19</div>
<div class="t" style="left:528px;top:334.88px;font-size:15.05px;line-height:16.811px;">22,88</div>
<div class="t" style="left:603px;top:334.88px;font-size:15.05px;line-height:16.811px;">5,98</div>
<div class="t" style="left:678px;top:334.88px;font-size:15.05px;line-height:16.811px;">17.05.2021 11:36:41</div>
<div class="t" style="left:828px;top:334.88px;font-size:15.05px;line-height:16.811px;">38,00</div>
<div class="t" style="left:903px;top:334.88px;font-size:15.05px;line-height:16.811px;">0,49</div>
<div class="a" style="left:0px;top:352px;width:74px;height:21px;background:linear-gradient(#fefefe,#ebebeb)"></div>
<div class="a" style="left:0px;top:373px;width:75px;height:1px;background:#808080"></div>
<div class="t" style="left:3.5px;top:356.045px;font-size:11px;line-height:12.287px;font-weight:bold;letter-spacing:0.6px;">15</div>
<div class="a" style="left:75px;top:373px;width:900px;height:1px;background:#c0c0c0"></div>
<div class="t" style="left:78px;top:356.88px;font-size:15.05px;line-height:16.811px;">17.05.2021 11:15:16</div>
<div class="t" style="left:228px;top:356.88px;font-size:15.05px;line-height:16.811px;">22,88</div>
<div class="t" style="left:303px;top:356.88px;font-size:15.05px;line-height:16.811px;">0,34</div>
<div class="t" style="left:378px;top:356.88px;font-size:15.05px;line-height:16.811px;">17.05.2021 11:19:20</div>
<div class="t" style="left:528px;top:356.88px;font-size:15.05px;line-height:16.811px;">22,88</div>
<div class="t" style="left:603px;top:356.88px;font-size:15.05px;line-height:16.811px;">5,98</div>
<div class="t" style="left:678px;top:356.88px;font-size:15.05px;line-height:16.811px;">17.05.2021 11:36:42</div>
<div class="t" style="left:828px;top:356.88px;font-size:15.05px;line-height:16.811px;">38,06</div>
<div class="t" style="left:903px;top:356.88px;font-size:15.05px;line-height:16.811px;">0,60</div>
<div class="a" style="left:0px;top:374px;width:74px;height:21px;background:linear-gradient(#fefefe,#ebebeb)"></div>
<div class="a" style="left:0px;top:395px;width:75px;height:1px;background:#808080"></div>
<div class="t" style="left:3.5px;top:378.045px;font-size:11px;line-height:12.287px;font-weight:bold;letter-spacing:0.6px;">16</div>
<div class="a" style="left:75px;top:395px;width:900px;height:1px;background:#c0c0c0"></div>
<div class="t" style="left:78px;top:378.88px;font-size:15.05px;line-height:16.811px;">17.05.2021 11:15:17</div>
<div class="t" style="left:228px;top:378.88px;font-size:15.05px;line-height:16.811px;">22,88</div>
<div class="t" style="left:303px;top:378.88px;font-size:15.05px;line-height:16.811px;">0,36</div>
<div class="t" style="left:378px;top:378.88px;font-size:15.05px;line-height:16.811px;">17.05.2021 11:19:21</div>
<div class="t" style="left:528px;top:378.88px;font-size:15.05px;line-height:16.811px;">22,88</div>
<div class="t" style="left:603px;top:378.88px;font-size:15.05px;line-height:16.811px;">5,98</div>
<div class="t" style="left:678px;top:378.88px;font-size:15.05px;line-height:16.811px;">17.05.2021 11:36:43</div>
<div class="t" style="left:828px;top:378.88px;font-size:15.05px;line-height:16.811px;">38,06</div>
<div class="t" style="left:903px;top:378.88px;font-size:15.05px;line-height:16.811px;">0,89</div>
<div class="a" style="left:0px;top:396px;width:74px;height:21px;background:linear-gradient(#fefefe,#ebebeb)"></div>
<div class="a" style="left:0px;top:417px;width:75px;height:1px;background:#808080"></div>
<div class="t" style="left:3.5px;top:400.045px;font-size:11px;line-height:12.287px;font-weight:bold;letter-spacing:0.6px;">17</div>
<div class="a" style="left:75px;top:417px;width:900px;height:1px;background:#c0c0c0"></div>
<div class="t" style="left:78px;top:400.88px;font-size:15.05px;line-height:16.811px;">17.05.2021 11:15:18</div>
<div class="t" style="left:228px;top:400.88px;font-size:15.05px;line-height:16.811px;">22,81</div>
<div class="t" style="left:303px;top:400.88px;font-size:15.05px;line-height:16.811px;">0,54</div>
<div class="t" style="left:378px;top:400.88px;font-size:15.05px;line-height:16.811px;">17.05.2021 11:19:22</div>
<div class="t" style="left:528px;top:400.88px;font-size:15.05px;line-height:16.811px;">22,88</div>
<div class="t" style="left:603px;top:400.88px;font-size:15.05px;line-height:16.811px;">5,98</div>
<div class="t" style="left:678px;top:400.88px;font-size:15.05px;line-height:16.811px;">17.05.2021 11:36:44</div>
<div class="t" style="left:828px;top:400.88px;font-size:15.05px;line-height:16.811px;">38,06</div>
<div class="t" style="left:903px;top:400.88px;font-size:15.05px;line-height:16.811px;">1,02</div>
<div class="a" style="left:0px;top:418px;width:74px;height:21px;background:linear-gradient(#fefefe,#ebebeb)"></div>
<div class="a" style="left:0px;top:439px;width:75px;height:1px;background:#808080"></div>
<div class="t" style="left:3.5px;top:422.045px;font-size:11px;line-height:12.287px;font-weight:bold;letter-spacing:0.6px;">18</div>
<div class="a" style="left:75px;top:439px;width:900px;height:1px;background:#c0c0c0"></div>
<div class="t" style="left:78px;top:422.88px;font-size:15.05px;line-height:16.811px;">17.05.2021 11:15:19</div>
<div class="t" style="left:228px;top:422.88px;font-size:15.05px;line-height:16.811px;">22,81</div>
<div class="t" style="left:303px;top:422.88px;font-size:15.05px;line-height:16.811px;">0,80</div>
<div class="t" style="left:378px;top:422.88px;font-size:15.05px;line-height:16.811px;">17.05.2021 11:19:23</div>
<div class="t" style="left:528px;top:422.88px;font-size:15.05px;line-height:16.811px;">22,88</div>
<div class="t" style="left:603px;top:422.88px;font-size:15.05px;line-height:16.811px;">5,98</div>
<div class="t" style="left:678px;top:422.88px;font-size:15.05px;line-height:16.811px;">17.05.2021 11:36:45</div>
<div class="t" style="left:828px;top:422.88px;font-size:15.05px;line-height:16.811px;">38,06</div>
<div class="t" style="left:903px;top:422.88px;font-size:15.05px;line-height:16.811px;">1,01</div>
<div class="a" style="left:0px;top:440px;width:74px;height:21px;background:linear-gradient(#fefefe,#ebebeb)"></div>
<div class="a" style="left:0px;top:461px;width:75px;height:1px;background:#808080"></div>
<div class="t" style="left:3.5px;top:444.045px;font-size:11px;line-height:12.287px;font-weight:bold;letter-spacing:0.6px;">19</div>
<div class="a" style="left:75px;top:461px;width:900px;height:1px;background:#c0c0c0"></div>
<div class="t" style="left:78px;top:444.88px;font-size:15.05px;line-height:16.811px;">17.05.2021 11:15:20</div>
<div class="t" style="left:228px;top:444.88px;font-size:15.05px;line-height:16.811px;">22,88</div>
<div class="t" style="left:303px;top:444.88px;font-size:15.05px;line-height:16.811px;">1,04</div>
<div class="t" style="left:378px;top:444.88px;font-size:15.05px;line-height:16.811px;">17.05.2021 11:19:24</div>
<div class="t" style="left:528px;top:444.88px;font-size:15.05px;line-height:16.811px;">22,88</div>
<div class="t" style="left:603px;top:444.88px;font-size:15.05px;line-height:16.811px;">5,98</div>
<div class="t" style="left:678px;top:444.88px;font-size:15.05px;line-height:16.811px;">17.05.2021 11:36:46</div>
<div class="t" style="left:828px;top:444.88px;font-size:15.05px;line-height:16.811px;">38,06</div>
<div class="t" style="left:903px;top:444.88px;font-size:15.05px;line-height:16.811px;">1,01</div>
<div class="a" style="left:0px;top:462px;width:74px;height:21px;background:linear-gradient(#fefefe,#ebebeb)"></div>
<div class="a" style="left:0px;top:483px;width:75px;height:1px;background:#808080"></div>
<div class="t" style="left:3.5px;top:466.045px;font-size:11px;line-height:12.287px;font-weight:bold;letter-spacing:0.6px;">20</div>
<div class="a" style="left:75px;top:483px;width:900px;height:1px;background:#c0c0c0"></div>
<div class="t" style="left:78px;top:466.88px;font-size:15.05px;line-height:16.811px;">17.05.2021 11:15:21</div>
<div class="t" style="left:228px;top:466.88px;font-size:15.05px;line-height:16.811px;">22,88</div>
<div class="t" style="left:303px;top:466.88px;font-size:15.05px;line-height:16.811px;">0,98</div>
<div class="t" style="left:378px;top:466.88px;font-size:15.05px;line-height:16.811px;">17.05.2021 11:19:25</div>
<div class="t" style="left:528px;top:466.88px;font-size:15.05px;line-height:16.811px;">22,88</div>
<div class="t" style="left:603px;top:466.88px;font-size:15.05px;line-height:16.811px;">5,98</div>
<div class="t" style="left:678px;top:466.88px;font-size:15.05px;line-height:16.811px;">17.05.2021 11:36:47</div>
<div class="t" style="left:828px;top:466.88px;font-size:15.05px;line-height:16.811px;">38,06</div>
<div class="t" style="left:903px;top:466.88px;font-size:15.05px;line-height:16.811px;">1,01</div>
<div class="a" style="left:0px;top:484px;width:74px;height:21px;background:linear-gradient(#fefefe,#ebebeb)"></div>
<div class="a" style="left:0px;top:505px;width:75px;height:1px;background:#808080"></div>
<div class="t" style="left:3.5px;top:488.045px;font-size:11px;line-height:12.287px;font-weight:bold;letter-spacing:0.6px;">21</div>
<div class="a" style="left:75px;top:505px;width:900px;height:1px;background:#c0c0c0"></div>
<div class="t" style="left:78px;top:488.88px;font-size:15.05px;line-height:16.811px;">17.05.2021 11:15:22</div>
<div class="t" style="left:228px;top:488.88px;font-size:15.05px;line-height:16.811px;">22,88</div>
<div class="t" style="left:303px;top:488.88px;font-size:15.05px;line-height:16.811px;">0,98</div>
<div class="t" style="left:378px;top:488.88px;font-size:15.05px;line-height:16.811px;">17.05.2021 11:19:26</div>
<div class="t" style="left:528px;top:488.88px;font-size:15.05px;line-height:16.811px;">22,88</div>
<div class="t" style="left:603px;top:488.88px;font-size:15.05px;line-height:16.811px;">5,98</div>
<div class="t" style="left:678px;top:488.88px;font-size:15.05px;line-height:16.811px;">17.05.2021 11:36:48</div>
<div class="t" style="left:828px;top:488.88px;font-size:15.05px;line-height:16.811px;">38,06</div>
<div class="t" style="left:903px;top:488.88px;font-size:15.05px;line-height:16.811px;">1,01</div>
<div class="a" style="left:0px;top:506px;width:74px;height:21px;background:linear-gradient(#fefefe,#ebebeb)"></div>
<div class="a" style="left:0px;top:527px;width:75px;height:1px;background:#808080"></div>
<div class="t" style="left:3.5px;top:510.045px;font-size:11px;line-height:12.287px;font-weight:bold;letter-spacing:0.6px;">22</div>
<div class="a" style="left:75px;top:527px;width:900px;height:1px;background:#c0c0c0"></div>
<div class="t" style="left:78px;top:510.88px;font-size:15.05px;line-height:16.811px;">17.05.2021 11:15:23</div>
<div class="t" style="left:228px;top:510.88px;font-size:15.05px;line-height:16.811px;">22,88</div>
<div class="t" style="left:303px;top:510.88px;font-size:15.05px;line-height:16.811px;">0,99</div>
<div class="t" style="left:378px;top:510.88px;font-size:15.05px;line-height:16.811px;">17.05.2021 11:19:27</div>
<div class="t" style="left:528px;top:510.88px;font-size:15.05px;line-height:16.811px;">22,88</div>
<div class="t" style="left:603px;top:510.88px;font-size:15.05px;line-height:16.811px;">6,01</div>
<div class="t" style="left:678px;top:510.88px;font-size:15.05px;line-height:16.811px;">17.05.2021 11:36:49</div>
<div class="t" style="left:828px;top:510.88px;font-size:15.05px;line-height:16.811px;">38,06</div>
<div class="t" style="left:903px;top:510.88px;font-size:15.05px;line-height:16.811px;">1,01</div>
<div class="a" style="left:0px;top:528px;width:74px;height:21px;background:linear-gradient(#fefefe,#ebebeb)"></div>
<div class="a" style="left:0px;top:549px;width:75px;height:1px;background:#808080"></div>
<div class="t" style="left:3.5px;top:532.045px;font-size:11px;line-height:12.287px;font-weight:bold;letter-spacing:0.6px;">23</div>
<div class="a" style="left:75px;top:549px;width:900px;height:1px;background:#c0c0c0"></div>
<div class="t" style="left:78px;top:532.88px;font-size:15.05px;line-height:16.811px;">17.05.2021 11:15:24</div>
<div class="t" style="left:228px;top:532.88px;font-size:15.05px;line-height:16.811px;">22,88</div>
<div class="t" style="left:303px;top:532.88px;font-size:15.05px;line-height:16.811px;">0,99</div>
<div class="t" style="left:378px;top:532.88px;font-size:15.05px;line-height:16.811px;">17.05.2021 11:19:28</div>
<div class="t" style="left:528px;top:532.88px;font-size:15.05px;line-height:16.811px;">22,88</div>
<div class="t" style="left:603px;top:532.88px;font-size:15.05px;line-height:16.811px;">5,98</div>
<div class="t" style="left:678px;top:532.88px;font-size:15.05px;line-height:16.811px;">17.05.2021 11:36:50</div>
<div class="t" style="left:828px;top:532.88px;font-size:15.05px;line-height:16.811px;">38,06</div>
<div class="t" style="left:903px;top:532.88px;font-size:15.05px;line-height:16.811px;">1,01</div>
<div class="a" style="left:0px;top:550px;width:74px;height:21px;background:linear-gradient(#fefefe,#ebebeb)"></div>
<div class="a" style="left:0px;top:571px;width:75px;height:1px;background:#808080"></div>
<div class="t" style="left:3.5px;top:554.045px;font-size:11px;line-height:12.287px;font-weight:bold;letter-spacing:0.6px;">24</div>
<div class="a" style="left:75px;top:571px;width:900px;height:1px;background:#c0c0c0"></div>
<div class="t" style="left:78px;top:554.88px;font-size:15.05px;line-height:16.811px;">17.05.2021 11:15:25</div>
<div class="t" style="left:228px;top:554.88px;font-size:15.05px;line-height:16.811px;">22,88</div>
<div class="t" style="left:303px;top:554.88px;font-size:15.05px;line-height:16.811px;">0,98</div>
<div class="t" style="left:378px;top:554.88px;font-size:15.05px;line-height:16.811px;">17.05.2021 11:19:29</div>
<div class="t" style="left:528px;top:554.88px;font-size:15.05px;line-height:16.811px;">22,88</div>
<div class="t" style="left:603px;top:554.88px;font-size:15.05px;line-height:16.811px;">5,98</div>
<div class="t" style="left:678px;top:554.88px;font-size:15.05px;line-height:16.811px;">17.05.2021 11:36:51</div>
<div class="t" style="left:828px;top:554.88px;font-size:15.05px;line-height:16.811px;">38,06</div>
<div class="t" style="left:903px;top:554.88px;font-size:15.05px;line-height:16.811px;">1,01</div>
<div class="a" style="left:0px;top:572px;width:74px;height:21px;background:linear-gradient(#fefefe,#ebebeb)"></div>
<div class="a" style="left:0px;top:593px;width:75px;height:1px;background:#808080"></div>
<div class="t" style="left:3.5px;top:576.045px;font-size:11px;line-height:12.287px;font-weight:bold;letter-spacing:0.6px;">25</div>
<div class="a" style="left:75px;top:593px;width:900px;height:1px;background:#c0c0c0"></div>
<div class="t" style="left:78px;top:576.88px;font-size:15.05px;line-height:16.811px;">17.05.2021 11:15:26</div>
<div class="t" style="left:228px;top:576.88px;font-size:15.05px;line-height:16.811px;">22,88</div>
<div class="t" style="left:303px;top:576.88px;font-size:15.05px;line-height:16.811px;">0,98</div>
<div class="t" style="left:378px;top:576.88px;font-size:15.05px;line-height:16.811px;">17.05.2021 11:19:30</div>
<div class="t" style="left:528px;top:576.88px;font-size:15.05px;line-height:16.811px;">22,88</div>
<div class="t" style="left:603px;top:576.88px;font-size:15.05px;line-height:16.811px;">5,99</div>
<div class="t" style="left:678px;top:576.88px;font-size:15.05px;line-height:16.811px;">17.05.2021 11:36:52</div>
<div class="t" style="left:828px;top:576.88px;font-size:15.05px;line-height:16.811px;">38,06</div>
<div class="t" style="left:903px;top:576.88px;font-size:15.05px;line-height:16.811px;">1,01</div>
<div class="a" style="left:0px;top:594px;width:74px;height:21px;background:linear-gradient(#fefefe,#ebebeb)"></div>
<div class="a" style="left:0px;top:615px;width:75px;height:1px;background:#808080"></div>
<div class="t" style="left:3.5px;top:598.045px;font-size:11px;line-height:12.287px;font-weight:bold;letter-spacing:0.6px;">26</div>
<div class="a" style="left:75px;top:615px;width:900px;height:1px;background:#c0c0c0"></div>
<div class="t" style="left:78px;top:598.88px;font-size:15.05px;line-height:16.811px;">17.05.2021 11:15:27</div>
<div class="t" style="left:228px;top:598.88px;font-size:15.05px;line-height:16.811px;">22,88</div>
<div class="t" style="left:303px;top:598.88px;font-size:15.05px;line-height:16.811px;">0,92</div>
<div class="t" style="left:378px;top:598.88px;font-size:15.05px;line-height:16.811px;">17.05.2021 11:19:31</div>
<div class="t" style="left:528px;top:598.88px;font-size:15.05px;line-height:16.811px;">22,88</div>
<div class="t" style="left:603px;top:598.88px;font-size:15.05px;line-height:16.811px;">5,95</div>
<div class="t" style="left:678px;top:598.88px;font-size:15.05px;line-height:16.811px;">17.05.2021 11:36:53</div>
<div class="t" style="left:828px;top:598.88px;font-size:15.05px;line-height:16.811px;">38,06</div>
<div class="t" style="left:903px;top:598.88px;font-size:15.05px;line-height:16.811px;">1,01</div>
<div class="a" style="left:0px;top:616px;width:74px;height:21px;background:linear-gradient(#fefefe,#ebebeb)"></div>
<div class="a" style="left:0px;top:637px;width:75px;height:1px;background:#808080"></div>
<div class="t" style="left:3.5px;top:620.045px;font-size:11px;line-height:12.287px;font-weight:bold;letter-spacing:0.6px;">27</div>
<div class="a" style="left:75px;top:637px;width:900px;height:1px;background:#c0c0c0"></div>
<div class="t" style="left:78px;top:620.88px;font-size:15.05px;line-height:16.811px;">17.05.2021 11:15:28</div>
<div class="t" style="left:228px;top:620.88px;font-size:15.05px;line-height:16.811px;">22,88</div>
<div class="t" style="left:303px;top:620.88px;font-size:15.05px;line-height:16.811px;">0,98</div>
<div class="t" style="left:378px;top:620.88px;font-size:15.05px;line-height:16.811px;">17.05.2021 11:19:32</div>
<div class="t" style="left:528px;top:620.88px;font-size:15.05px;line-height:16.811px;">22,88</div>
<div class="t" style="left:603px;top:620.88px;font-size:15.05px;line-height:16.811px;">5,98</div>
<div class="t" style="left:678px;top:620.88px;font-size:15.05px;line-height:16.811px;">17.05.2021 11:36:54</div>
<div class="t" style="left:828px;top:620.88px;font-size:15.05px;line-height:16.811px;">38,06</div>
<div class="t" style="left:903px;top:620.88px;font-size:15.05px;line-height:16.811px;">1,01</div>
<div class="a" style="left:0px;top:638px;width:74px;height:21px;background:linear-gradient(#fefefe,#ebebeb)"></div>
<div class="a" style="left:0px;top:659px;width:75px;height:1px;background:#808080"></div>
<div class="t" style="left:3.5px;top:642.045px;font-size:11px;line-height:12.287px;font-weight:bold;letter-spacing:0.6px;">28</div>
<div class="a" style="left:75px;top:659px;width:900px;height:1px;background:#c0c0c0"></div>
<div class="t" style="left:78px;top:642.88px;font-size:15.05px;line-height:16.811px;">17.05.2021 11:15:29</div>
<div class="t" style="left:228px;top:642.88px;font-size:15.05px;line-height:16.811px;">22,88</div>
<div class="t" style="left:303px;top:642.88px;font-size:15.05px;line-height:16.811px;">0,98</div>
<div class="t" style="left:378px;top:642.88px;font-size:15.05px;line-height:16.811px;">17.05.2021 11:19:33</div>
<div class="t" style="left:528px;top:642.88px;font-size:15.05px;line-height:16.811px;">22,88</div>
<div class="t" style="left:603px;top:642.88px;font-size:15.05px;line-height:16.811px;">5,98</div>
<div class="t" style="left:678px;top:642.88px;font-size:15.05px;line-height:16.811px;">17.05.2021 11:36:55</div>
<div class="t" style="left:828px;top:642.88px;font-size:15.05px;line-height:16.811px;">38,06</div>
<div class="t" style="left:903px;top:642.88px;font-size:15.05px;line-height:16.811px;">1,01</div>
<div class="a" style="left:0px;top:660px;width:74px;height:21px;background:linear-gradient(#fefefe,#ebebeb)"></div>
<div class="a" style="left:0px;top:681px;width:75px;height:1px;background:#808080"></div>
<div class="t" style="left:3.5px;top:664.045px;font-size:11px;line-height:12.287px;font-weight:bold;letter-spacing:0.6px;">29</div>
<div class="a" style="left:75px;top:681px;width:900px;height:1px;background:#c0c0c0"></div>
<div class="t" style="left:78px;top:664.88px;font-size:15.05px;line-height:16.811px;">17.05.2021 11:15:30</div>
<div class="t" style="left:228px;top:664.88px;font-size:15.05px;line-height:16.811px;">22,88</div>
<div class="t" style="left:303px;top:664.88px;font-size:15.05px;line-height:16.811px;">0,98</div>
<div class="t" style="left:378px;top:664.88px;font-size:15.05px;line-height:16.811px;">17.05.2021 11:19:34</div>
<div class="t" style="left:528px;top:664.88px;font-size:15.05px;line-height:16.811px;">22,88</div>
<div class="t" style="left:603px;top:664.88px;font-size:15.05px;line-height:16.811px;">5,98</div>
<div class="t" style="left:678px;top:664.88px;font-size:15.05px;line-height:16.811px;">17.05.2021 11:36:56</div>
<div class="t" style="left:828px;top:664.88px;font-size:15.05px;line-height:16.811px;">38,06</div>
<div class="t" style="left:903px;top:664.88px;font-size:15.05px;line-height:16.811px;">1,01</div>
<div class="a" style="left:0px;top:682px;width:74px;height:21px;background:linear-gradient(#fefefe,#ebebeb)"></div>
<div class="a" style="left:0px;top:703px;width:75px;height:1px;background:#808080"></div>
<div class="t" style="left:3.5px;top:686.045px;font-size:11px;line-height:12.287px;font-weight:bold;letter-spacing:0.6px;">30</div>
<div class="a" style="left:75px;top:703px;width:900px;height:1px;background:#c0c0c0"></div>
<div class="t" style="left:78px;top:686.88px;font-size:15.05px;line-height:16.811px;">17.05.2021 11:15:31</div>
<div class="t" style="left:228px;top:686.88px;font-size:15.05px;line-height:16.811px;">22,88</div>
<div class="t" style="left:303px;top:686.88px;font-size:15.05px;line-height:16.811px;">1,30</div>
<div class="t" style="left:378px;top:686.88px;font-size:15.05px;line-height:16.811px;">17.05.2021 11:19:35</div>
<div class="t" style="left:528px;top:686.88px;font-size:15.05px;line-height:16.811px;">22,88</div>
<div class="t" style="left:603px;top:686.88px;font-size:15.05px;line-height:16.811px;">5,98</div>
<div class="t" style="left:678px;top:686.88px;font-size:15.05px;line-height:16.811px;">17.05.2021 11:36:57</div>
<div class="t" style="left:828px;top:686.88px;font-size:15.05px;line-height:16.811px;">38,06</div>
<div class="t" style="left:903px;top:686.88px;font-size:15.05px;line-height:16.811px;">1,01</div>
<div class="a" style="left:0px;top:704px;width:74px;height:21px;background:linear-gradient(#fefefe,#ebebeb)"></div>
<div class="a" style="left:0px;top:725px;width:75px;height:1px;background:#808080"></div>
<div class="t" style="left:3.5px;top:708.045px;font-size:11px;line-height:12.287px;font-weight:bold;letter-spacing:0.6px;">31</div>
<div class="a" style="left:75px;top:725px;width:900px;height:1px;background:#c0c0c0"></div>
<div class="t" style="left:78px;top:708.88px;font-size:15.05px;line-height:16.811px;">17.05.2021 11:15:32</div>
<div class="t" style="left:228px;top:708.88px;font-size:15.05px;line-height:16.811px;">22,88</div>
<div class="t" style="left:303px;top:708.88px;font-size:15.05px;line-height:16.811px;">1,42</div>
<div class="t" style="left:378px;top:708.88px;font-size:15.05px;line-height:16.811px;">17.05.2021 11:19:36</div>
<div class="t" style="left:528px;top:708.88px;font-size:15.05px;line-height:16.811px;">22,88</div>
<div class="t" style="left:603px;top:708.88px;font-size:15.05px;line-height:16.811px;">5,98</div>
<div class="t" style="left:678px;top:708.88px;font-size:15.05px;line-height:16.811px;">17.05.2021 11:36:58</div>
<div class="t" style="left:828px;top:708.88px;font-size:15.05px;line-height:16.811px;">38,06</div>
<div class="t" style="left:903px;top:708.88px;font-size:15.05px;line-height:16.811px;">1,29</div>
<div class="a" style="left:0px;top:726px;width:74px;height:21px;background:linear-gradient(#fefefe,#ebebeb)"></div>
<div class="a" style="left:0px;top:747px;width:75px;height:1px;background:#808080"></div>
<div class="t" style="left:3.5px;top:730.045px;font-size:11px;line-height:12.287px;font-weight:bold;letter-spacing:0.6px;">32</div>
<div class="a" style="left:75px;top:747px;width:900px;height:1px;background:#c0c0c0"></div>
<div class="t" style="left:78px;top:730.88px;font-size:15.05px;line-height:16.811px;">17.05.2021 11:15:33</div>
<div class="t" style="left:228px;top:730.88px;font-size:15.05px;line-height:16.811px;">22,88</div>
<div class="t" style="left:303px;top:730.88px;font-size:15.05px;line-height:16.811px;">2,09</div>
<div class="t" style="left:378px;top:730.88px;font-size:15.05px;line-height:16.811px;">17.05.2021 11:19:37</div>
<div class="t" style="left:528px;top:730.88px;font-size:15.05px;line-height:16.811px;">22,88</div>
<div class="t" style="left:603px;top:730.88px;font-size:15.05px;line-height:16.811px;">5,98</div>
<div class="t" style="left:678px;top:730.88px;font-size:15.05px;line-height:16.811px;">17.05.2021 11:36:59</div>
<div class="t" style="left:828px;top:730.88px;font-size:15.05px;line-height:16.811px;">38,06</div>
<div class="t" style="left:903px;top:730.88px;font-size:15.05px;line-height:16.811px;">1,47</div>
<div class="a" style="left:74px;top:22px;width:1px;height:719px;background:#808080"></div>
<div class="a" style="left:224px;top:22px;width:1px;height:719px;background:#c0c0c0"></div>
<div class="a" style="left:299px;top:22px;width:1px;height:719px;background:#c0c0c0"></div>
<div class="a" style="left:374px;top:22px;width:1px;height:719px;background:#c0c0c0"></div>
<div class="a" style="left:524px;top:22px;width:1px;height:719px;background:#c0c0c0"></div>
<div class="a" style="left:599px;top:22px;width:1px;height:719px;background:#c0c0c0"></div>
<div class="a" style="left:674px;top:22px;width:1px;height:719px;background:#c0c0c0"></div>
<div class="a" style="left:824px;top:22px;width:1px;height:719px;background:#c0c0c0"></div>
<div class="a" style="left:899px;top:22px;width:1px;height:719px;background:#c0c0c0"></div>
<div class="a" style="left:974px;top:22px;width:1px;height:719px;background:#c0c0c0"></div>
</div>
<div class="a" style="left:5px;top:291px;width:1672px;height:1px;background:#7f9fbf"></div>
<div class="a" style="left:5px;top:291px;width:1px;height:743px;background:#7f9fbf"></div>
<div class="a" style="left:5px;top:1033px;width:1672px;height:1px;background:#7f9fbf"></div>
</body></html>
